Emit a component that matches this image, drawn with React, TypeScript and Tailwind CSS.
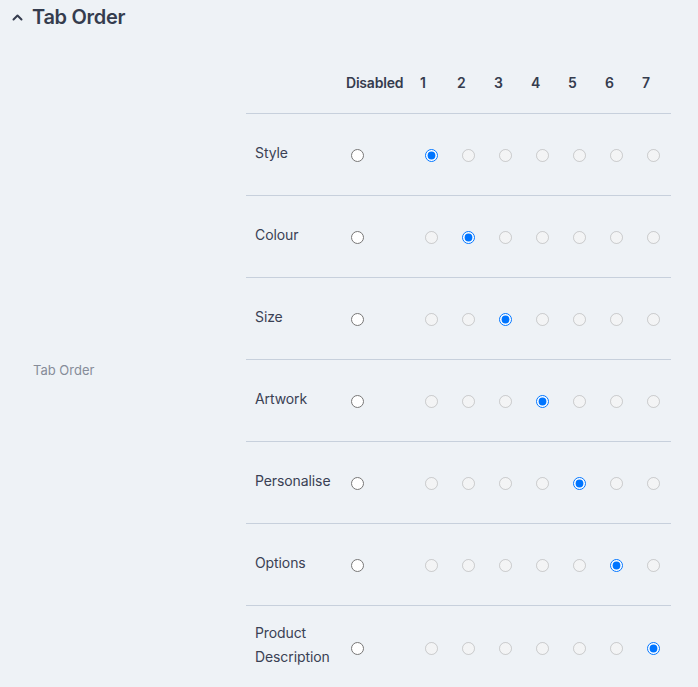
import { useState } from "react";

const ROWS = ["Style", "Colour", "Size", "Artwork", "Personalise", "Options", "Product Description"];
const COLS = [1, 2, 3, 4, 5, 6, 7];

export default function App() {
  const [order, setOrder] = useState<Record<string, number>>(() =>
    Object.fromEntries(ROWS.map((r, i) => [r, i + 1]))
  );

  return (
    <div
      className="min-h-screen bg-[#eef2f6] text-[#353c4e]"
      style={{ fontFamily: "Inter, 'Noto Sans', sans-serif" }}
    >
      <div className="flex items-center gap-[9px] pl-[12px] pt-[4px] h-[30px]">
        <svg width="11" height="7" viewBox="0 0 11 7" fill="none" stroke="#353c4e" strokeWidth="2" strokeLinecap="round" strokeLinejoin="round">
          <path d="M1.5 5.5 L5.5 1.5 L9.5 5.5" />
        </svg>
        <h2 className="text-[20px] font-semibold tracking-[-0.3px] leading-none">Tab Order</h2>
      </div>

      <div className="flex mt-[31px]">
        <div className="w-[246px] shrink-0 pl-[33px] pt-[296px]">
          <span className="text-[13px] text-[#868c99]">Tab Order</span>
        </div>

        <div className="w-[425px]">
          <div className="grid grid-cols-[94px_74px_repeat(7,37px)] h-[53px] items-center border-b border-[#c7d0dc] text-[14px] font-semibold text-[#353c4e]">
            <div />
            <div className="pl-[6px] pb-[10px] tracking-[-0.2px]">Disabled</div>
            {COLS.map((c) => (
              <div key={c} className="pl-[6px] pb-[10px]">{c}</div>
            ))}
          </div>

          {ROWS.map((row, i) => (
            <div
              key={row}
              className={`grid grid-cols-[94px_74px_repeat(7,37px)] h-[82px] items-center text-[14px] ${i < ROWS.length - 1 ? "border-b border-[#c7d0dc]" : ""}`}
            >
              <div className="pl-[9px] pr-[6px] leading-[24px] text-[#3a4154] -mt-[4px] tracking-[-0.1px]">{row}</div>
              <div className="pl-[11px] pt-[2px] flex items-center">
                <input
                  type="radio"
                  name={row}
                  checked={order[row] === 0}
                  onChange={() => setOrder({ ...order, [row]: 0 })}
                  className="m-0 w-[13px] h-[13px]"
                />
              </div>
              {COLS.map((c) => (
                <div key={c} className="pl-[11px] pt-[2px] flex items-center">
                  <input
                    type="radio"
                    name={row}
                    checked={order[row] === c}
                    disabled={order[row] !== c}
                    onChange={() => setOrder({ ...order, [row]: c })}
                    className="m-0 w-[13px] h-[13px]"
                  />
                </div>
              ))}
            </div>
          ))}
        </div>
      </div>
    </div>
  );
}
